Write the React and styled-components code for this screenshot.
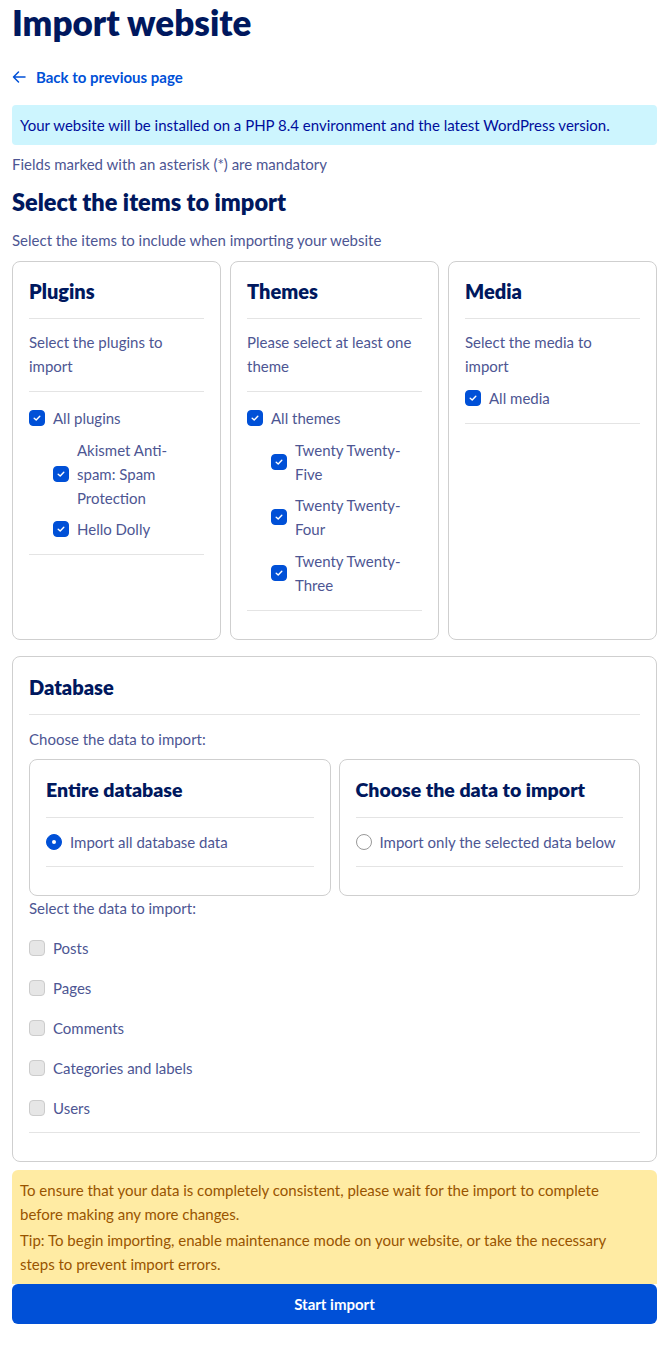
import React from 'react'
import styled, { createGlobalStyle } from 'styled-components'

const GlobalStyle = createGlobalStyle`
    body {
        margin: 0;
        background: #ffffff;
        font-family: Lato, "Liberation Sans", sans-serif;
        color: #4d5693;
        font-size: 15px;
    }
    * { box-sizing: border-box; }
`

const Page = styled.div`
    padding: 0 14px 22px 12px;
    display: flex;
    flex-direction: column;
`

const Title = styled.h1`
    margin: 2px 0 0;
    font-size: 35px;
    line-height: 40px;
    font-weight: 800;
    color: #00185e;
`

const BackLink = styled.a`
    margin-top: 23px;
    display: flex;
    align-items: center;
    gap: 10px;
    line-height: 24px;
    font-weight: 700;
    color: #0050d7;
    text-decoration: none;
    cursor: pointer;
`

const InfoBox = styled.div`
    margin-top: 16px;
    padding: 8px;
    line-height: 24px;
    background: #cdf5fe;
    color: #000e9c;
    border-radius: 4px;
`

const Text = styled.p`
    margin: ${p => p.mt || 0}px 0 0;
    line-height: 24px;
`

// card descriptions wrap a little earlier, as in the original font
const Desc = styled.p`
    margin: 0;
    padding-right: 4px;
    line-height: 24px;
`

const SectionTitle = styled.h2`
    margin: 10px 0 0;
    font-size: 23.5px;
    line-height: 32px;
    font-weight: 800;
    color: #00185e;
`

const CardGrid = styled.div`
    margin-top: 9px;
    display: grid;
    grid-template-columns: repeat(3, 1fr);
    gap: 9px;
`

const Card = styled.div`
    border: 1px solid #cfcfcf;
    border-radius: 8px;
    padding: ${p => (p.roomy ? 16 : 15)}px 16px 28px;
    display: flex;
    flex-direction: column;
`

const CardTitle = styled.h3`
    margin: 0;
    padding-bottom: 13px;
    border-bottom: 1px solid #e4e4e4;
    font-size: 20px;
    line-height: 28px;
    font-weight: 800;
    color: #00185e;
`

const Section = styled.div`
    padding: ${p => p.pad || '11px 0 12px'};
    border-bottom: 1px solid #e4e4e4;
    display: flex;
    flex-direction: column;
    gap: ${p => p.gap || 7.5}px;
`

const Item = styled.label`
    display: flex;
    align-items: center;
    gap: 8px;
    line-height: 24px;
    padding-left: ${p => (p.nested ? 24 : 0)}px;
`

const Box = styled.span`
    flex: none;
    width: 16px;
    height: 16px;
    border-radius: 4px;
    display: flex;
    align-items: center;
    justify-content: center;
    background: ${p => (p.checked ? '#0050d7' : '#e6e6e6')};
    border: 1px solid ${p => (p.checked ? '#0050d7' : '#cccccc')};
`

const Radio = styled.span`
    flex: none;
    width: 16px;
    height: 16px;
    border-radius: 50%;
    display: flex;
    align-items: center;
    justify-content: center;
    background: ${p => (p.checked ? '#0050d7' : '#ffffff')};
    border: 1px solid ${p => (p.checked ? '#0050d7' : '#999999')};

    &::after {
        content: '';
        width: 4px;
        height: 4px;
        border-radius: 50%;
        background: #ffffff;
        display: ${p => (p.checked ? 'block' : 'none')};
    }
`

const DbCard = styled(Card)`
    margin-top: 16px;
`

const ChoiceGrid = styled.div`
    margin-top: 8px;
    display: grid;
    grid-template-columns: 1fr 1fr;
    gap: 8px;
`

const ChoiceTitle = styled(CardTitle)`
    font-size: 19.5px;
`

const Warning = styled.div`
    margin-top: 8px;
    padding: 8px 30px 8px 8px;
    background: #ffeba3;
    color: #995400;
    border-radius: 6px 6px 0 0;
    display: flex;
    flex-direction: column;
    gap: 2px;
    line-height: 24px;
`

const StartButton = styled.button`
    height: 40px;
    border: none;
    border-radius: 6px;
    background: #0050d7;
    color: #ffffff;
    font-family: inherit;
    font-size: 15px;
    font-weight: 700;
    cursor: pointer;
`

function Check({ checked }) {
    return (
        <Box checked={checked}>
            {checked && (
                <svg width="10" height="10" viewBox="0 0 10 10">
                    <path d="M2.2 5.2 L4.2 7 L7.8 3.2" fill="none" stroke="#fff" strokeWidth="1.4" strokeLinecap="round" strokeLinejoin="round" />
                </svg>
            )}
        </Box>
    )
}

const dataItems = ['Posts', 'Pages', 'Comments', 'Categories and labels', 'Users']

export default function App() {
    return (
        <>
            <GlobalStyle />
            <Page>
                <Title>Import website</Title>
                <BackLink>
                    <svg width="14" height="14" viewBox="0 0 14 14">
                        <path d="M13 7 H1.5 M6.5 2 L1.5 7 L6.5 12" fill="none" stroke="#0050d7" strokeWidth="1.5" strokeLinecap="round" strokeLinejoin="round" />
                    </svg>
                    Back to previous page
                </BackLink>
                <InfoBox>Your website will be installed on a PHP 8.4 environment and the latest WordPress version.</InfoBox>
                <Text mt={7}>Fields marked with an asterisk (*) are mandatory</Text>
                <SectionTitle>Select the items to import</SectionTitle>
                <Text mt={10}>Select the items to include when importing your website</Text>

                <CardGrid>
                    <Card>
                        <CardTitle>Plugins</CardTitle>
                        <Section pad="11px 0 13px">
                            <Desc>Select the plugins to import</Desc>
                        </Section>
                        <Section pad="14px 0 13px">
                            <Item><Check checked />All plugins</Item>
                            <Item nested><Check checked />Akismet Anti-spam: Spam Protection</Item>
                            <Item nested><Check checked />Hello Dolly</Item>
                        </Section>
                    </Card>
                    <Card>
                        <CardTitle>Themes</CardTitle>
                        <Section pad="11px 0 13px">
                            <Desc>Please select at least one theme</Desc>
                        </Section>
                        <Section pad="14px 0 13px">
                            <Item><Check checked />All themes</Item>
                            <Item nested><Check checked />Twenty Twenty-Five</Item>
                            <Item nested><Check checked />Twenty Twenty-Four</Item>
                            <Item nested><Check checked />Twenty Twenty-Three</Item>
                        </Section>
                    </Card>
                    <Card>
                        <CardTitle>Media</CardTitle>
                        <Section pad="11px 0 13px">
                            <Desc>Select the media to import</Desc>
                            <Item><Check checked />All media</Item>
                        </Section>
                    </Card>
                </CardGrid>

                <DbCard roomy>
                    <CardTitle>Database</CardTitle>
                    <Text mt={12}>Choose the data to import:</Text>
                    <ChoiceGrid>
                        <Card roomy>
                            <ChoiceTitle>Entire database</ChoiceTitle>
                            <Section pad="12px 0 12px">
                                <Item><Radio checked />Import all database data</Item>
                            </Section>
                        </Card>
                        <Card roomy>
                            <ChoiceTitle>Choose the data to import</ChoiceTitle>
                            <Section pad="12px 0 12px">
                                <Item><Radio />Import only the selected data below</Item>
                            </Section>
                        </Card>
                    </ChoiceGrid>
                    <Text>Select the data to import:</Text>
                    <Section pad="16px 0 12px" gap={16}>
                        {dataItems.map(d => (
                            <Item key={d}><Check />{d}</Item>
                        ))}
                    </Section>
                </DbCard>

                <Warning>
                    <div>To ensure that your data is completely consistent, please wait for the import to complete before making any more changes.</div>
                    <div>Tip: To begin importing, enable maintenance mode on your website, or take the necessary steps to prevent import errors.</div>
                </Warning>
                <StartButton>Start import</StartButton>
            </Page>
        </>
    )
}
